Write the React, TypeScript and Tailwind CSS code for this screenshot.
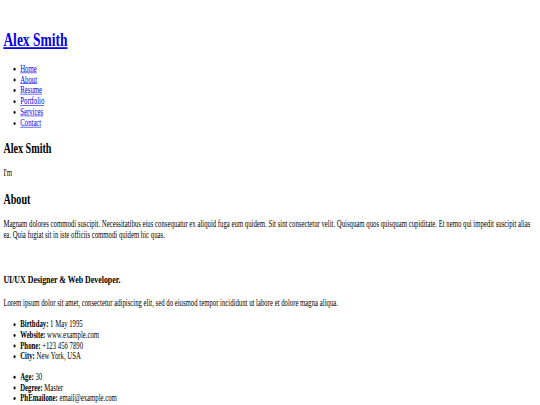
const NAV = ["Home", "About", "Resume", "Portfolio", "Services", "Contact"];

const INFO_LEFT = [
  ["Birthday:", "1 May 1995"],
  ["Website:", "www.example.com"],
  ["Phone:", "+123 456 7890"],
  ["City:", "New York, USA"],
];

const INFO_RIGHT = [
  ["Age:", "30"],
  ["Degree:", "Master"],
  ["PhEmailone:", "email@example.com"],
];

function InfoList({ items }: { items: string[][] }) {
  return (
    <ul className="my-[17.5px] list-disc pl-10 leading-[18px]">
      {items.map(([k, v]) => (
        <li key={k}>
          <strong className="font-bold">{k}</strong> {v}
        </li>
      ))}
    </ul>
  );
}

export default function App() {
  return (
    <div className="h-[405px] w-[540px] overflow-hidden bg-white">
      <div className="w-[1280px] origin-top-left scale-x-[0.421875] scale-y-[0.59] p-2 pt-[28px] font-['Liberation_Serif',serif] text-base leading-[1.15] text-black">
        {/* Header */}
        <header>
          <h1 className="my-[21.44px] text-[32px] font-bold">
            <a href="#" className="text-[#0000ee] underline">Alex Smith</a>
          </h1>
          <nav>
            <ul className="my-4 list-disc pl-10">
              {NAV.map((n) => (
                <li key={n}>
                  <a href="#" className="text-[#0000ee] underline">{n}</a>
                </li>
              ))}
            </ul>
          </nav>
        </header>

        {/* Hero */}
        <section>
          <h2 className="my-[19.92px] text-[24px] font-bold">Alex Smith</h2>
          <p className="my-4">I'm</p>
        </section>

        {/* About */}
        <section>
          <h2 className="my-[19.92px] text-[24px] font-bold">About</h2>
          <p className="my-4">
            Magnam dolores commodi suscipit. Necessitatibus eius consequatur ex aliquid fuga eum quidem. Sit sint
            consectetur velit. Quisquam quos quisquam cupiditate. Et nemo qui impedit suscipit alias ea. Quia fugiat
            sit in iste officiis commodi quidem hic quas.
          </p>
          <div className="pt-[20px]">
            <h3 className="mt-[18.72px] mb-[20.7px] text-[18.72px] font-bold">UI/UX Designer &amp; Web Developer.</h3>
            <p className="my-4">
              Lorem ipsum dolor sit amet, consectetur adipiscing elit, sed do eiusmod tempor incididunt ut labore et
              dolore magna aliqua.
            </p>
            <InfoList items={INFO_LEFT} />
            <InfoList items={INFO_RIGHT} />
          </div>
        </section>
      </div>
    </div>
  );
}
